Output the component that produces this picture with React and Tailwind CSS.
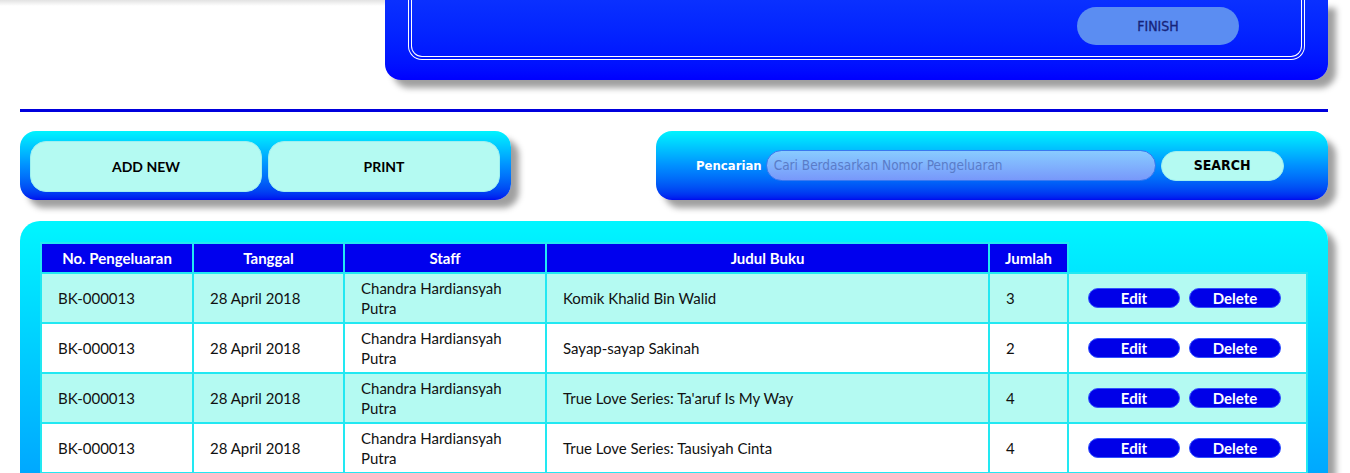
import React from "react";

const rows = [
  { no: "BK-000013", tgl: "28 April 2018", staff: "Chandra Hardiansyah Putra", judul: "Komik Khalid Bin Walid", jml: "3" },
  { no: "BK-000013", tgl: "28 April 2018", staff: "Chandra Hardiansyah Putra", judul: "Sayap-sayap Sakinah", jml: "2" },
  { no: "BK-000013", tgl: "28 April 2018", staff: "Chandra Hardiansyah Putra", judul: "True Love Series: Ta'aruf Is My Way", jml: "4" },
  { no: "BK-000013", tgl: "28 April 2018", staff: "Chandra Hardiansyah Putra", judul: "True Love Series: Tausiyah Cinta", jml: "4" },
];

const cond = { fontFamily: '"DejaVu Sans Condensed", "DejaVu Sans", sans-serif', fontStretch: "condensed" };

export default function App() {
  return (
    <div className="w-[1350px] bg-white pb-10 font-['Lato','Open_Sans',sans-serif] text-black">
      {/* top row */}
      <div className="flex">
        <div className="w-[385px]">
          <div className="h-[6px] bg-gradient-to-b from-[#e2e2e2] to-white" />
        </div>
        <div className="w-[943px] h-[80px] rounded-b-[16px] bg-gradient-to-b from-[#0a30ff] to-[#0000ff] shadow-[8px_8px_6px_#a0a0a0]">
          <div className="mx-[23px] h-[60px] border-[4px] border-t-0 border-double border-white rounded-b-[14px] flex justify-end items-start pr-[62px]">
            <button
              style={cond}
              className="mt-[7px] w-[162px] h-[38px] rounded-full bg-[#5b8df2] text-[#16237a] text-[14px] [-webkit-text-stroke:0.3px_#16237a]"
            >
              FINISH
            </button>
          </div>
        </div>
      </div>

      {/* divider */}
      <div className="mt-[29px] mx-[20px] w-[1308px] h-[3px] bg-[#0000dd]" />

      {/* controls */}
      <div className="mt-[19px] flex justify-between pl-[20px] pr-[22px]">
        <div className="w-[491px] h-[69px] rounded-[16px] bg-gradient-to-b from-[#00f4ff] via-[#0090ff] to-[#0008ee] shadow-[8px_8px_6px_#a0a0a0] flex items-start pt-[10px] gap-[6px] px-[10px]">
          <button className="w-[232px] h-[51px] rounded-[16px] bg-[#b4faf2] border border-[#9ef0f0] font-bold text-[14px] text-black">
            ADD NEW
          </button>
          <button className="w-[232px] h-[51px] rounded-[16px] bg-[#b4faf2] border border-[#9ef0f0] font-bold text-[14px] text-black">
            PRINT
          </button>
        </div>
        <div className="w-[672px] h-[69px] rounded-[16px] bg-gradient-to-b from-[#00f4ff] via-[#0090ff] to-[#0008ee] shadow-[8px_8px_6px_#a0a0a0] flex items-center pl-[40px]">
          <span style={cond} className="text-white font-bold text-[13px] mr-[4px]">Pencarian</span>
          <div
            style={cond}
            className="w-[390px] h-[31px] rounded-full bg-gradient-to-b from-[#88ccff] to-[#7898fa] border border-[#3a78f0] flex items-center pl-[7px] text-[13.5px] text-[#5a7cc8]"
          >
            Cari Berdasarkan Nomor Pengeluaran
          </div>
          <button
            style={cond}
            className="ml-[5px] w-[123px] h-[30px] rounded-full bg-[#b4faf2] border border-[#9ef0f0] font-bold text-[14px] text-black"
          >
            SEARCH
          </button>
        </div>
      </div>

      {/* table panel */}
      <div className="mt-[21px] mx-[20px] w-[1308px] rounded-t-[20px] bg-[linear-gradient(#00f6ff,#00a8ff_252px,#0090ff)] shadow-[8px_8px_6px_#a0a0a0] pt-[21px] pl-[20px] pr-[22px] pb-[20px]">
        <table className="table-fixed border-collapse w-[1266px] text-[15px]">
          <colgroup>
            <col className="w-[152px]" />
            <col className="w-[151px]" />
            <col className="w-[202px]" />
            <col className="w-[443px]" />
            <col className="w-[79px]" />
            <col className="w-[239px]" />
          </colgroup>
          <thead>
            <tr className="h-[30px]">
              {["No. Pengeluaran", "Tanggal", "Staff", "Judul Buku", "Jumlah"].map((h) => (
                <th key={h} className="bg-[#0000ee] text-white font-bold text-[15px] border-2 border-[#22e8f2] text-center">
                  {h}
                </th>
              ))}
              <th className="border-0" />
            </tr>
          </thead>
          <tbody>
            {rows.map((r, i) => (
              <tr key={i} className={`h-[50px] ${i % 2 === 0 ? "bg-[#b4faf2]" : "bg-white"}`}>
                <td className="border-2 border-[#22e8f2] pl-[16px] text-[#111]">{r.no}</td>
                <td className="border-2 border-[#22e8f2] pl-[16px] text-[#111]">{r.tgl}</td>
                <td className="border-2 border-[#22e8f2] pl-[16px] pr-[16px] leading-[20px] text-[#111]">{r.staff}</td>
                <td className="border-2 border-[#22e8f2] pl-[16px] text-[#111]">{r.judul}</td>
                <td className="border-2 border-[#22e8f2] pl-[16px] text-[#111]">{r.jml}</td>
                <td className="border-2 border-[#22e8f2] pl-[19px]">
                  <div className="flex gap-[9px]">
                    <button className="w-[92px] h-[20px] rounded-full bg-[#0000e8] border border-[#3050ff] text-white font-bold text-[15px] leading-none">
                      Edit
                    </button>
                    <button className="w-[92px] h-[20px] rounded-full bg-[#0000e8] border border-[#3050ff] text-white font-bold text-[15px] leading-none">
                      Delete
                    </button>
                  </div>
                </td>
              </tr>
            ))}
          </tbody>
        </table>
      </div>
    </div>
  );
}
